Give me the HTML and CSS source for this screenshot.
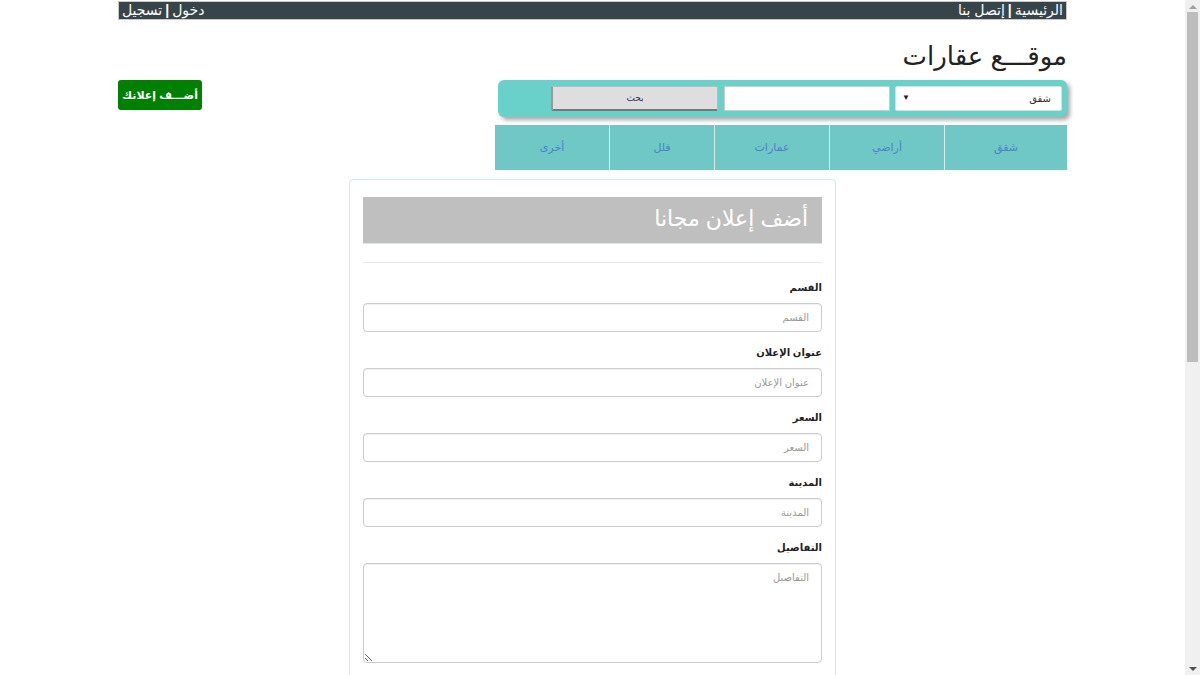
FILE: index.html
```html
<!DOCTYPE html>
<html lang="ar" dir="rtl">
<head>
<meta charset="utf-8">
<title>موقع عقارات</title>
<link rel="stylesheet" href="styles.css">
</head>
<body>
<div class="topbar">
  <div class="topbar-links">
    <a href="#">الرئيسية</a><span class="sep">|</span><a href="#">إتصل بنا</a>
  </div>
  <div class="topbar-links">
    <a href="#">دخول</a><span class="sep">|</span><a href="#">تسجيل</a>
  </div>
</div>

<div class="container">
  <h1 class="site-title">موقـــع عقارات</h1>

  <div class="search-row">
    <form class="search-box">
      <span class="select-wrap">
        <select class="search-select">
          <option>شقق</option>
        </select>
      </span>
      <input class="search-input" type="text">
      <button class="search-btn" type="button">بحث</button>
    </form>
    <a href="#" class="add-btn">أضـــف إعلانك</a>
  </div>

  <nav class="cats">
    <a href="#" class="cat c1">شقق</a>
    <a href="#" class="cat c2">أراضي</a>
    <a href="#" class="cat c3">عمارات</a>
    <a href="#" class="cat c4">فلل</a>
    <a href="#" class="cat c5">أخرى</a>
  </nav>

  <div class="card">
    <div class="card-head">أضف إعلان مجانا</div>
    <hr class="divider">
    <div class="field">
      <label>القسم</label>
      <input type="text" placeholder="القسم">
    </div>
    <div class="field">
      <label>عنوان الإعلان</label>
      <input type="text" placeholder="عنوان الإعلان">
    </div>
    <div class="field">
      <label>السعر</label>
      <input type="text" placeholder="السعر">
    </div>
    <div class="field">
      <label>المدينة</label>
      <input type="text" placeholder="المدينة">
    </div>
    <div class="field">
      <label>التفاصيل</label>
      <textarea placeholder="التفاصيل"></textarea>
    </div>
  </div>
</div>

<div class="fake-scroll" aria-hidden="true">
  <span class="sb-arrow sb-up"></span>
  <span class="sb-thumb"></span>
  <span class="sb-arrow sb-down"></span>
</div>
</body>
</html>
```

FILE: styles.css
```css
* { box-sizing: border-box; }
html, body { margin: 0; padding: 0; }
body {
  font-family: "Liberation Sans", "DejaVu Sans", Arial, sans-serif;
  background: #fff;
  color: #333;
  padding-right: 15px;
}
a { text-decoration: none; }

/* scrollbar drawn as in the reference */
.fake-scroll {
  position: fixed;
  top: 0;
  right: 0;
  width: 15px;
  height: 100%;
  background: #f0f0f0;
  display: flex;
  flex-direction: column;
  align-items: center;
}
.sb-arrow {
  width: 0;
  height: 0;
  border-left: 4px solid transparent;
  border-right: 4px solid transparent;
}
.sb-up {
  border-bottom: 4px solid #a0a0a0;
  margin-top: 5px;
}
.sb-thumb {
  width: 11px;
  height: 350px;
  background: #bdbdbd;
  margin-top: 3px;
}
.sb-down {
  border-top: 4px solid #505050;
  margin-top: auto;
  margin-bottom: 4px;
}

.topbar {
  width: 949px;
  margin: 1px auto 0;
  height: 19px;
  background: #37454b;
  border: 1px solid #c8c8c8;
  display: flex;
  justify-content: space-between;
  align-items: center;
  padding: 0 3px;
}
.topbar-links {
  display: flex;
  align-items: center;
  font-size: 14px;
  line-height: 17px;
}
.topbar-links a { color: #fff; }
.topbar-links .sep { color: #fff; margin: 0 3px; font-weight: bold; }

.container {
  width: 949px;
  margin: 0 auto;
}

.site-title {
  margin: 14px 0 0;
  font-size: 26px;
  font-weight: normal;
  line-height: 44px;
  color: #222;
  height: 46px;
}

.search-row {
  display: flex;
  justify-content: space-between;
  align-items: flex-start;
}

.search-box {
  width: 569px;
  height: 37px;
  background: #69d0ca;
  border-radius: 6px;
  box-shadow: 3px 3px 4px rgba(0,0,0,0.35);
  display: flex;
  align-items: flex-start;
  padding: 6px 5px 0 0;
  margin: 0;
}
.select-wrap {
  position: relative;
  display: block;
  width: 167px;
  height: 25px;
}
.select-wrap::after {
  content: "▼";
  position: absolute;
  left: 7px;
  top: 7px;
  font-size: 8px;
  line-height: 10px;
  color: #222;
  pointer-events: none;
}
.search-select {
  -webkit-appearance: none;
  appearance: none;
  width: 167px;
  height: 25px;
  margin: 0;
  border: 1px solid #ddd;
  border-radius: 2px;
  background: #fff;
  font-family: inherit;
  font-size: 10px;
  padding: 0 10px;
  color: #333;
}
.search-input {
  width: 166px;
  height: 25px;
  margin: 0 5px 0 0;
  border: 1px solid #ccc;
  background: #fff;
  border-radius: 1px;
}
.search-btn {
  width: 167px;
  height: 25px;
  margin: 0 6px 0 0;
  border: 1px solid #bbb;
  border-bottom: 2px solid #777;
  border-left: 2px solid #999;
  background: #dedede;
  font-family: inherit;
  font-size: 9px;
  color: #333;
  border-radius: 2px;
}

.add-btn {
  width: 84px;
  height: 30px;
  background: #008000;
  color: #fff;
  font-size: 11px;
  font-weight: bold;
  border-radius: 3px;
  display: flex;
  align-items: center;
  justify-content: center;
}

.cats {
  width: 572px;
  height: 45px;
  margin-top: 8px;
  display: flex;
  background: #6fc8c6;
}
.cat {
  display: flex;
  align-items: center;
  justify-content: center;
  color: #4b82c6;
  font-size: 11px;
  border-left: 1px solid #d8eceb;
}
.cat:last-child { border-left: none; }
.c1 { width: 123px; }
.c2 { width: 115px; }
.c3 { width: 115px; }
.c4 { width: 105px; }
.c5 { width: 114px; }

.card {
  width: 487px;
  margin: 9px auto 0;
  border: 1px solid #c9ecf2;
  border-radius: 4px;
  padding: 17px 13px 10px;
}
.card-head {
  background: #bfbfbf;
  height: 47px;
  color: #fff;
  font-size: 22px;
  line-height: 44px;
  padding: 0 14px;
  border-bottom: 1px solid #d8e8ea;
}
.divider {
  border: 0;
  border-top: 1px solid #e8e8e8;
  margin: 18px 0 17px;
}
.field { margin-bottom: 13px; }
.field label {
  display: block;
  font-size: 10px;
  font-weight: bold;
  line-height: 16px;
  color: #222;
  margin-bottom: 7px;
}
.field input, .field textarea {
  display: block;
  width: 100%;
  height: 29px;
  border: 1px solid #ccc;
  border-radius: 4px;
  padding: 0 12px;
  font-family: inherit;
  font-size: 10px;
  color: #555;
  margin: 0;
  box-shadow: inset 0 1px 1px rgba(0,0,0,0.06);
}
.field textarea {
  height: 100px;
  padding: 8px 12px;
  resize: vertical;
}
.field input::placeholder, .field textarea::placeholder { color: #999; }
```
